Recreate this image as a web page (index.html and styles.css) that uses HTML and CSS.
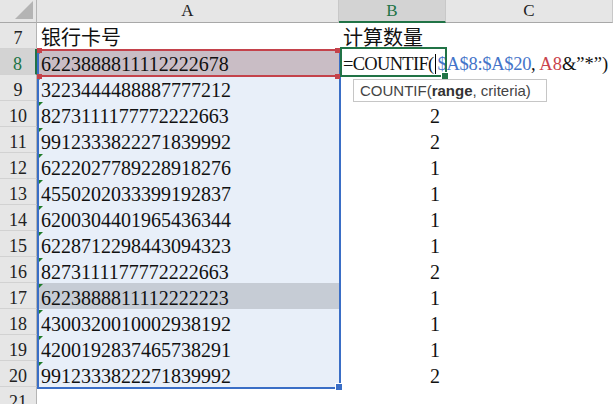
FILE: index.html
```html
<!DOCTYPE html>
<html lang="zh-CN">
<head>
  <meta charset="UTF-8">
  <title>COUNTIF</title>
  <link rel="stylesheet" href="styles.css">
</head>
<body>
  <div class="hoja">
    <!-- cabecera de columnas -->
    <div class="esquina"><span class="tri"></span></div>
    <div class="col-head">A</div>
    <div class="col-head activa">B</div>
    <div class="col-head">C</div>

    <div class="row-head">7</div>
    <div class="celda">银行卡号</div>
    <div class="celda">计算数量</div>
    <div class="celda"></div>

    <div class="row-head activa">8</div>
    <div class="celda rango marca fila8">6223888811112222678</div>
    <div class="celda formula"><span class="fn">=COUNTIF(</span><i class="cursor"></i><span class="azul">$A$8:$A$20</span>, <span class="rojo">A8</span>&amp;”*”)</div>
    <div class="celda"></div>

    <div class="row-head">9</div>
    <div class="celda rango marca">3223444488887777212</div>
    <div class="celda num"></div>
    <div class="celda"></div>

    <div class="row-head">10</div>
    <div class="celda rango marca">8273111177772222663</div>
    <div class="celda num">2</div>
    <div class="celda"></div>

    <div class="row-head">11</div>
    <div class="celda rango marca">9912333822271839992</div>
    <div class="celda num">2</div>
    <div class="celda"></div>

    <div class="row-head">12</div>
    <div class="celda rango marca">6222027789228918276</div>
    <div class="celda num">1</div>
    <div class="celda"></div>

    <div class="row-head">13</div>
    <div class="celda rango marca">4550202033399192837</div>
    <div class="celda num">1</div>
    <div class="celda"></div>

    <div class="row-head">14</div>
    <div class="celda rango marca">6200304401965436344</div>
    <div class="celda num">1</div>
    <div class="celda"></div>

    <div class="row-head">15</div>
    <div class="celda rango marca">6228712298443094323</div>
    <div class="celda num">1</div>
    <div class="celda"></div>

    <div class="row-head">16</div>
    <div class="celda rango marca">8273111177772222663</div>
    <div class="celda num">2</div>
    <div class="celda"></div>

    <div class="row-head">17</div>
    <div class="celda rango marca fila17">6223888811112222223</div>
    <div class="celda num">1</div>
    <div class="celda"></div>

    <div class="row-head">18</div>
    <div class="celda rango marca">4300320010002938192</div>
    <div class="celda num">1</div>
    <div class="celda"></div>

    <div class="row-head">19</div>
    <div class="celda rango marca">4200192837465738291</div>
    <div class="celda num">1</div>
    <div class="celda"></div>

    <div class="row-head">20</div>
    <div class="celda rango marca">9912333822271839992</div>
    <div class="celda num">2</div>
    <div class="celda"></div>

    <div class="row-head">21</div>
    <div class="celda"></div>
    <div class="celda"></div>
    <div class="celda"></div>

    <!-- bordes de seleccion encima de las celdas -->
    <div class="sel-azul"></div>
    <div class="asa asa-azul"></div>
    <div class="sel-roja"></div>
    <div class="asa asa-roja r1"></div>
    <div class="asa asa-roja r2"></div>
    <div class="asa asa-roja r3"></div>
    <div class="asa asa-roja r4"></div>
    <div class="sel-verde"></div>
    <div class="asa asa-verde"></div>

    <div class="ayuda">COUNTIF(<b>range</b>, criteria)</div>
  </div>
</body>
</html>
```

FILE: styles.css
```css
/* Hoja de calculo */
*{
    box-sizing: border-box;
}
body{
    margin: 0;
    background: #fff;
    overflow: hidden;
}
.hoja{
    position: relative;
    width: 613px;
    height: 404px;
    display: grid;
    grid-template-columns: 37px 302px 107px 1fr;
    grid-template-rows: 23px;
    grid-auto-rows: 26px;
    font-family: "Liberation Serif", "Noto Sans CJK SC", serif;
    color: #111;
}

/* cabeceras */
.esquina{
    background: #e6e6e6;
    border-right: 1px solid #b4b4b4;
    border-bottom: 1px solid #a8a8a8;
    position: relative;
}
.esquina .tri{
    position: absolute;
    right: 3px;
    bottom: 3px;
    width: 0;
    height: 0;
    border-left: 18px solid transparent;
    border-bottom: 18px solid #b4b4b4;
}
.col-head{
    background: #e6e6e6;
    border-right: 1px solid #c8c8c8;
    border-bottom: 1px solid #a8a8a8;
    font-size: 17px;
    text-align: center;
    line-height: 22px;
    color: #222;
}
.col-head.activa{
    background: #d3d3d3;
    color: #217346;
    border-bottom: 2px solid #217346;
}
.row-head{
    background: #e6e6e6;
    border-right: 1px solid #b4b4b4;
    border-bottom: 1px solid #d2d2d2;
    font-size: 18px;
    text-align: center;
    padding-top: 5px;
    line-height: 20px;
    color: #222;
}
.row-head.activa{
    background: #d3d3d3;
    color: #217346;
    border-right: 2px solid #217346;
}

/* celdas */
.celda{
    position: relative;
    font-size: 20px;
    padding: 4px 0 0 4px;
    line-height: 22px;
    white-space: nowrap;
}
.celda.rango{
    background: #e8eff9;
}
.celda.fila8{
    background: #c9bdc5;
}
.celda.fila17{
    background: #c6ccd5;
}
.celda.marca::before{
    content: "";
    position: absolute;
    left: 1px;
    top: 1px;
    border-top: 5px solid #1f7d2a;
    border-right: 5px solid transparent;
}
.celda.num{
    text-align: right;
    padding-right: 6px;
}
.formula{
    overflow: visible;
    z-index: 2;
    font-size: 18.5px;
    padding-left: 4px;
}
.formula .fn{
    letter-spacing: -0.7px;
}
.formula .azul{
    color: #4474c9;
    letter-spacing: -0.3px;
}
.formula .rojo{
    color: #c9434c;
}
.formula .cursor{
    display: inline-block;
    width: 1px;
    height: 20px;
    background: #000;
    vertical-align: -4px;
    margin: 0 1px 0 2px;
}

/* bordes de seleccion */
.sel-azul{
    position: absolute;
    left: 37px;
    top: 49px;
    width: 304px;
    height: 340px;
    border: 2px solid #3a6ec6;
}
.sel-roja{
    position: absolute;
    left: 37px;
    top: 49px;
    width: 302px;
    height: 28px;
    border-top: 2px solid #c4424b;
    border-bottom: 2px solid #c4424b;
}
.sel-verde{
    position: absolute;
    left: 340px;
    top: 47px;
    width: 107px;
    height: 30px;
    border: 2px solid #217346;
    z-index: 3;
}
.asa{
    position: absolute;
    width: 5px;
    height: 5px;
    z-index: 4;
}
.asa-azul{
    left: 336px;
    top: 384px;
    width: 6px;
    height: 6px;
    background: #3a6ec6;
    outline: 1px solid #fff;
}
.asa-roja{
    background: #c4424b;
}
.r1{ left: 37px; top: 48px; }
.r2{ left: 335px; top: 48px; }
.r3{ left: 37px; top: 74px; }
.r4{ left: 335px; top: 74px; }
.asa-verde{
    left: 442px;
    top: 73px;
    width: 6px;
    height: 6px;
    background: #217346;
    outline: 1px solid #fff;
}

/* ayuda de la funcion */
.ayuda{
    position: absolute;
    left: 353px;
    top: 79px;
    width: 194px;
    height: 23px;
    background: #fff;
    border: 1px solid #c6c6c6;
    font-family: "Liberation Sans", Arial, sans-serif;
    font-size: 15px;
    line-height: 21px;
    padding-left: 6px;
    color: #444;
    z-index: 5;
    white-space: nowrap;
}
.ayuda b{
    color: #333;
}
```
